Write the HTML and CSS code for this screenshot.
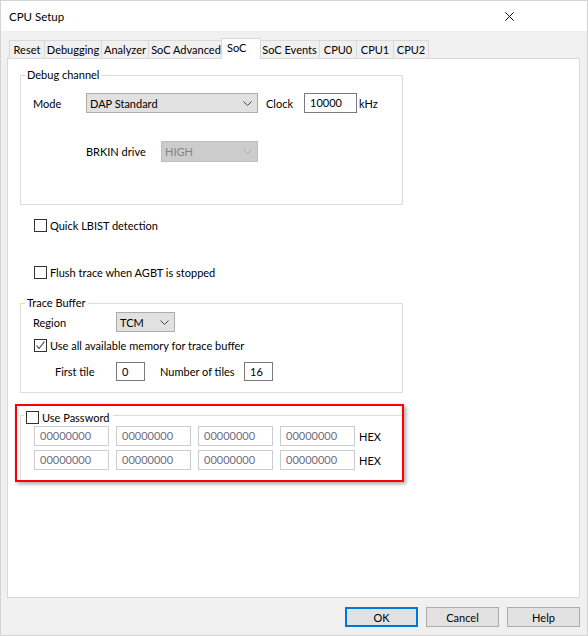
FILE: index.html
```html
<!DOCTYPE html>
<html>
<head>
<meta charset="utf-8">
<title>CPU Setup</title>
<link rel="stylesheet" href="styles.css">
</head>
<body>
<div class="window">
  <div class="titlebar">
    <span class="title">CPU Setup</span>
    <span class="close"><svg width="9" height="9" viewBox="0 0 9 9"><path d="M0.3 0.3 L8.7 8.7 M8.7 0.3 L0.3 8.7" stroke="#111" stroke-width="1" fill="none"/></svg></span>
  </div>
  <div class="client">
    <div class="tabs">
      <div class="tab t-reset">Reset</div>
      <div class="tab t-debugging">Debugging</div>
      <div class="tab t-analyzer">Analyzer</div>
      <div class="tab t-socadv">SoC Advanced</div>
      <div class="tab active">SoC</div>
      <div class="tab t-socev">SoC Events</div>
      <div class="tab t-cpu">CPU0</div>
      <div class="tab t-cpu">CPU1</div>
      <div class="tab t-cpu2">CPU2</div>
    </div>
    <div class="panel">
      <fieldset class="group debug">
        <legend>Debug channel</legend>
        <div class="row">
          <span class="lbl lbl-mode">Mode</span>
          <div class="select sel-mode"><span>DAP Standard</span><svg class="chev" width="9" height="5" viewBox="0 0 9 5"><polyline points="0.5,0.5 4.5,4.5 8.5,0.5" fill="none" stroke="#444" stroke-width="1"/></svg></div>
          <span class="lbl lbl-clock">Clock</span>
          <div class="edit ed-clock">10000</div>
          <span class="unit">kHz</span>
        </div>
        <div class="row row-brkin">
          <span class="lbl lbl-brkin">BRKIN drive</span>
          <div class="select disabled sel-brkin"><span>HIGH</span><svg class="chev" width="9" height="5" viewBox="0 0 9 5"><polyline points="0.5,0.5 4.5,4.5 8.5,0.5" fill="none" stroke="#a8a8a8" stroke-width="1"/></svg></div>
        </div>
      </fieldset>

      <label class="check chk-lbist"><span class="box"></span>Quick LBIST detection</label>
      <label class="check chk-flush"><span class="box"></span>Flush trace when AGBT is stopped</label>

      <fieldset class="group trace">
        <legend>Trace Buffer</legend>
        <div class="row">
          <span class="lbl lbl-region">Region</span>
          <div class="select sel-region"><span>TCM</span><svg class="chev" width="9" height="5" viewBox="0 0 9 5"><polyline points="0.5,0.5 4.5,4.5 8.5,0.5" fill="none" stroke="#444" stroke-width="1"/></svg></div>
        </div>
        <label class="check chk-mem"><span class="box"><svg width="11" height="11" viewBox="0 0 11 11"><polyline points="1.5,5.5 4,8.5 9.5,1.5" fill="none" stroke="#333" stroke-width="1.1"/></svg></span>Use all available memory for trace buffer</label>
        <div class="row row-tiles">
          <span class="lbl lbl-first">First tile</span>
          <div class="edit ed-tile">0</div>
          <span class="lbl lbl-num">Number of tiles</span>
          <div class="edit ed-tile">16</div>
        </div>
      </fieldset>

      <div class="highlight">
        <fieldset class="group password">
          <legend><label class="check"><span class="box"></span>Use Password</label></legend>
          <div class="pw-row">
            <div class="pw">00000000</div>
            <div class="pw">00000000</div>
            <div class="pw">00000000</div>
            <div class="pw">00000000</div>
            <span class="hex">HEX</span>
          </div>
          <div class="pw-row second">
            <div class="pw">00000000</div>
            <div class="pw">00000000</div>
            <div class="pw">00000000</div>
            <div class="pw">00000000</div>
            <span class="hex">HEX</span>
          </div>
        </fieldset>
      </div>
    </div>
    <div class="buttons">
      <div class="btn default">OK</div>
      <div class="btn">Cancel</div>
      <div class="btn">Help</div>
    </div>
  </div>
</div>
</body>
</html>
```

FILE: styles.css
```css
* { box-sizing: border-box; }
html, body { margin: 0; padding: 0; }
body {
  width: 588px;
  height: 636px;
  font-family: Lato, "Noto Sans", sans-serif;
  font-size: 11px;
  color: #000;
  background: #fff;
}
.window {
  width: 588px;
  height: 636px;
  border: 1px solid #d4d4d4;
  display: flex;
  flex-direction: column;
  background: #f0f0f0;
}
.titlebar {
  height: 30px;
  flex: none;
  background: #fff;
  display: flex;
  align-items: center;
  padding-left: 8px;
}
.title { flex: 1; font-size: 11.5px; padding-top: 1px; }
.close { width: 9px; height: 9px; margin-right: 73px; display: flex; }

.client {
  flex: 1;
  padding: 7px 7px 0 6px;
  display: flex;
  flex-direction: column;
}
.tabs {
  display: flex;
  align-items: flex-end;
  height: 21px;
  flex: none;
  margin-bottom: -1px;
  padding-left: 2px;
  position: relative;
  z-index: 1;
}
.tab {
  height: 18px;
  margin-bottom: 1px;
  border-top: 1px solid #d9d9d9;
  border-left: 1px solid #d9d9d9;
  background: #f0f0f0;
  text-align: center;
  line-height: 18px;
  white-space: nowrap;
}
.t-reset { width: 35px; }
.t-debugging { width: 57px; }
.t-analyzer { width: 47px; }
.t-socadv { width: 75px; }
.t-socev { width: 60px; }
.t-cpu { width: 37px; }
.t-cpu2 { width: 36px; border-right: 1px solid #d9d9d9; }
.tab.active {
  width: 40px;
  height: 21px;
  margin: 0 -2px;
  background: #fff;
  border-right: 1px solid #d9d9d9;
  text-align: left;
  padding-left: 5px;
  line-height: 18px;
  position: relative;
  z-index: 2;
}

.panel {
  height: 540px;
  flex: none;
  background: #fff;
  border: 1px solid #d9d9d9;
  padding: 8px 0 0 12px;
}

.group {
  width: 383px;
  margin: 0;
  min-width: 0;
  border: 1px solid #dcdcdc;
  padding: 10px 0 42px 12px;
}
.group legend {
  padding: 0 2px;
  margin-left: -8px;
  line-height: 16px;
}

.row {
  display: flex;
  align-items: center;
  height: 20px;
}
.lbl { flex: none; white-space: nowrap; }
.lbl-mode { width: 53px; }
.lbl-clock { width: 38px; margin-left: 8px; }
.unit { margin-left: 2px; }
.row-brkin { margin-top: 28px; margin-left: 53px; height: 21px; }
.lbl-brkin { width: 75px; }

.select {
  display: flex;
  align-items: center;
  justify-content: space-between;
  height: 20px;
  border: 1px solid #adadad;
  background: #e1e1e1;
  padding: 0 5px 0 3px;
  flex: none;
}
.chev { display: block; }
.sel-mode { width: 172px; }
.sel-brkin { width: 97px; height: 21px; }
.select.disabled {
  background: #cccccc;
  border-color: #bfbfbf;
  color: #838383;
}
.edit {
  height: 20px;
  border: 1px solid #7a7a7a;
  background: #fff;
  padding-left: 5px;
  line-height: 18px;
  flex: none;
}
.ed-clock { width: 53px; }

.check {
  display: flex;
  align-items: center;
  height: 15px;
  white-space: nowrap;
}
.box {
  width: 13px;
  height: 13px;
  border: 1px solid #333;
  background: #fff;
  margin-right: 3px;
  flex: none;
  display: flex;
  align-items: center;
  justify-content: center;
}
.chk-lbist { margin: 13px 0 0 14px; }
.chk-flush { margin: 32px 0 0 14px; }

.trace {
  margin-top: 15px;
  padding: 1px 0 11px 12px;
}
.lbl-region { width: 83px; }
.sel-region { width: 59px; }
.chk-mem { margin: 6px 0 0 1px; }
.row-tiles { margin-top: 9px; height: 19px; }
.lbl-first { width: 61px; margin-left: 22px; }
.lbl-num { width: 84px; margin-left: 15px; }
.ed-tile { width: 29px; height: 19px; line-height: 17px; }

.highlight {
  width: 389px;
  height: 78px;
  margin: 11px 0 0 -5px;
  border: 2px solid #ff0000;
  box-shadow: 2px 2px 4px rgba(0, 0, 0, 0.35);
  overflow: hidden;
  background: #fff;
}
.password {
  margin-left: 3px;
  height: 90px;
  padding: 1px 0 0 13px;
}
.password legend {
  margin-left: -10px;
  padding: 4px 4px 0 2px;
}
.pw-row {
  display: flex;
  align-items: center;
  gap: 7px;
  height: 20px;
}
.pw-row.second { margin-top: 4px; }
.pw {
  width: 75px;
  height: 20px;
  border: 1px solid #cccccc;
  padding-left: 5px;
  line-height: 18px;
  color: #6d6d80;
  flex: none;
}
.hex { margin-left: -3px; }

.buttons {
  display: flex;
  justify-content: flex-end;
  gap: 8px;
  margin-top: 9px;
}
.btn {
  width: 73px;
  height: 20px;
  border: 1px solid #adadad;
  background: #e1e1e1;
  display: flex;
  align-items: center;
  justify-content: center;
}
.btn.default { border: 2px solid #0078d7; }
```
